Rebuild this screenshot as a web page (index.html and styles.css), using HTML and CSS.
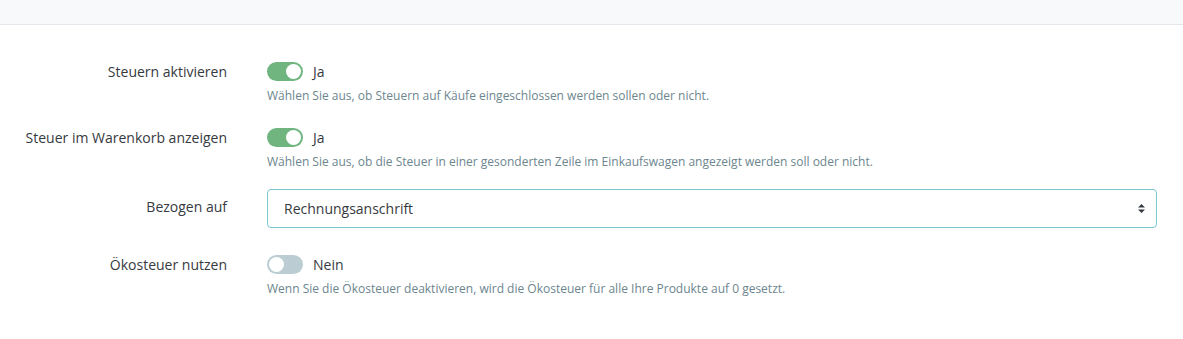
FILE: index.html
```html
<!DOCTYPE html>
<html lang="de">
<head>
<meta charset="utf-8">
<link rel="stylesheet" href="styles.css">
</head>
<body>
<div class="topbar"></div>
<form class="form">
  <div class="row row-first">
    <label class="label">Steuern aktivieren</label>
    <div class="field">
      <div class="switch-line">
        <span class="switch on"><span class="knob"></span></span>
        <span class="switch-text">Ja</span>
      </div>
      <p class="help">Wählen Sie aus, ob Steuern auf Käufe eingeschlossen werden sollen oder nicht.</p>
    </div>
  </div>
  <div class="row row-second">
    <label class="label">Steuer im Warenkorb anzeigen</label>
    <div class="field">
      <div class="switch-line">
        <span class="switch on"><span class="knob"></span></span>
        <span class="switch-text">Ja</span>
      </div>
      <p class="help">Wählen Sie aus, ob die Steuer in einer gesonderten Zeile im Einkaufswagen angezeigt werden soll oder nicht.</p>
    </div>
  </div>
  <div class="row row-select">
    <label class="label label-select">Bezogen auf</label>
    <div class="field">
      <div class="select">
        <span>Rechnungsanschrift</span>
        <svg class="arrows" width="7" height="9" viewBox="0 0 7 9"><path d="M3.5 0 L7 3.5 L0 3.5 Z M0 5.5 L7 5.5 L3.5 9 Z" fill="#363a41"/></svg>
      </div>
    </div>
  </div>
  <div class="row">
    <label class="label">Ökosteuer nutzen</label>
    <div class="field">
      <div class="switch-line">
        <span class="switch off"><span class="knob"></span></span>
        <span class="switch-text">Nein</span>
      </div>
      <p class="help">Wenn Sie die Ökosteuer deaktivieren, wird die Ökosteuer für alle Ihre Produkte auf 0 gesetzt.</p>
    </div>
  </div>
</form>
</body>
</html>
```
FILE: styles.css
```css
* { box-sizing: border-box; }
html, body { margin: 0; padding: 0; background: #fff; }
body {
  font-family: "Open Sans", "Noto Sans", sans-serif;
  color: #363a41;
  width: 1183px;
  height: 339px;
  overflow: hidden;
}
.topbar {
  height: 25px;
  background: #f8f9fb;
  border-bottom: 1px solid #e3e6ea;
}
.form {
  padding: 37px 26px 0 0;
}
.row {
  display: grid;
  grid-template-columns: 227px 1fr;
  column-gap: 40px;
}
.row-first { margin-bottom: 23px; }
.row-second { margin-bottom: 18px; }
.row-select { margin-bottom: 27px; }
.label {
  text-align: right;
  font-size: 14px;
  line-height: 20px;
  color: #363a41;
}
.label-select { padding-top: 8px; }
.field { min-width: 0; }
.switch-line {
  display: flex;
  align-items: center;
  height: 19px;
}
.switch {
  position: relative;
  width: 36px;
  height: 19px;
  border-radius: 10px;
  display: inline-block;
  flex: none;
}
.switch.on { background: #70b580; }
.switch.off { background: #bbcdd2; }
.knob {
  position: absolute;
  top: 2px;
  width: 15px;
  height: 15px;
  border-radius: 50%;
  background: #fff;
}
.switch.on .knob { right: 2px; }
.switch.off .knob { left: 2px; }
.switch-text {
  margin-left: 10px;
  font-size: 14px;
  color: #363a41;
}
.help {
  margin: 6px 0 0;
  font-size: 12px;
  line-height: 18px;
  color: #6c868e;
}
.select {
  height: 39px;
  border: 1px solid #7cc8d0;
  border-radius: 4px;
  display: flex;
  align-items: center;
  justify-content: space-between;
  padding: 0 11px 0 16px;
  font-size: 14px;
  color: #363a41;
}
.arrows { display: block; }
```
